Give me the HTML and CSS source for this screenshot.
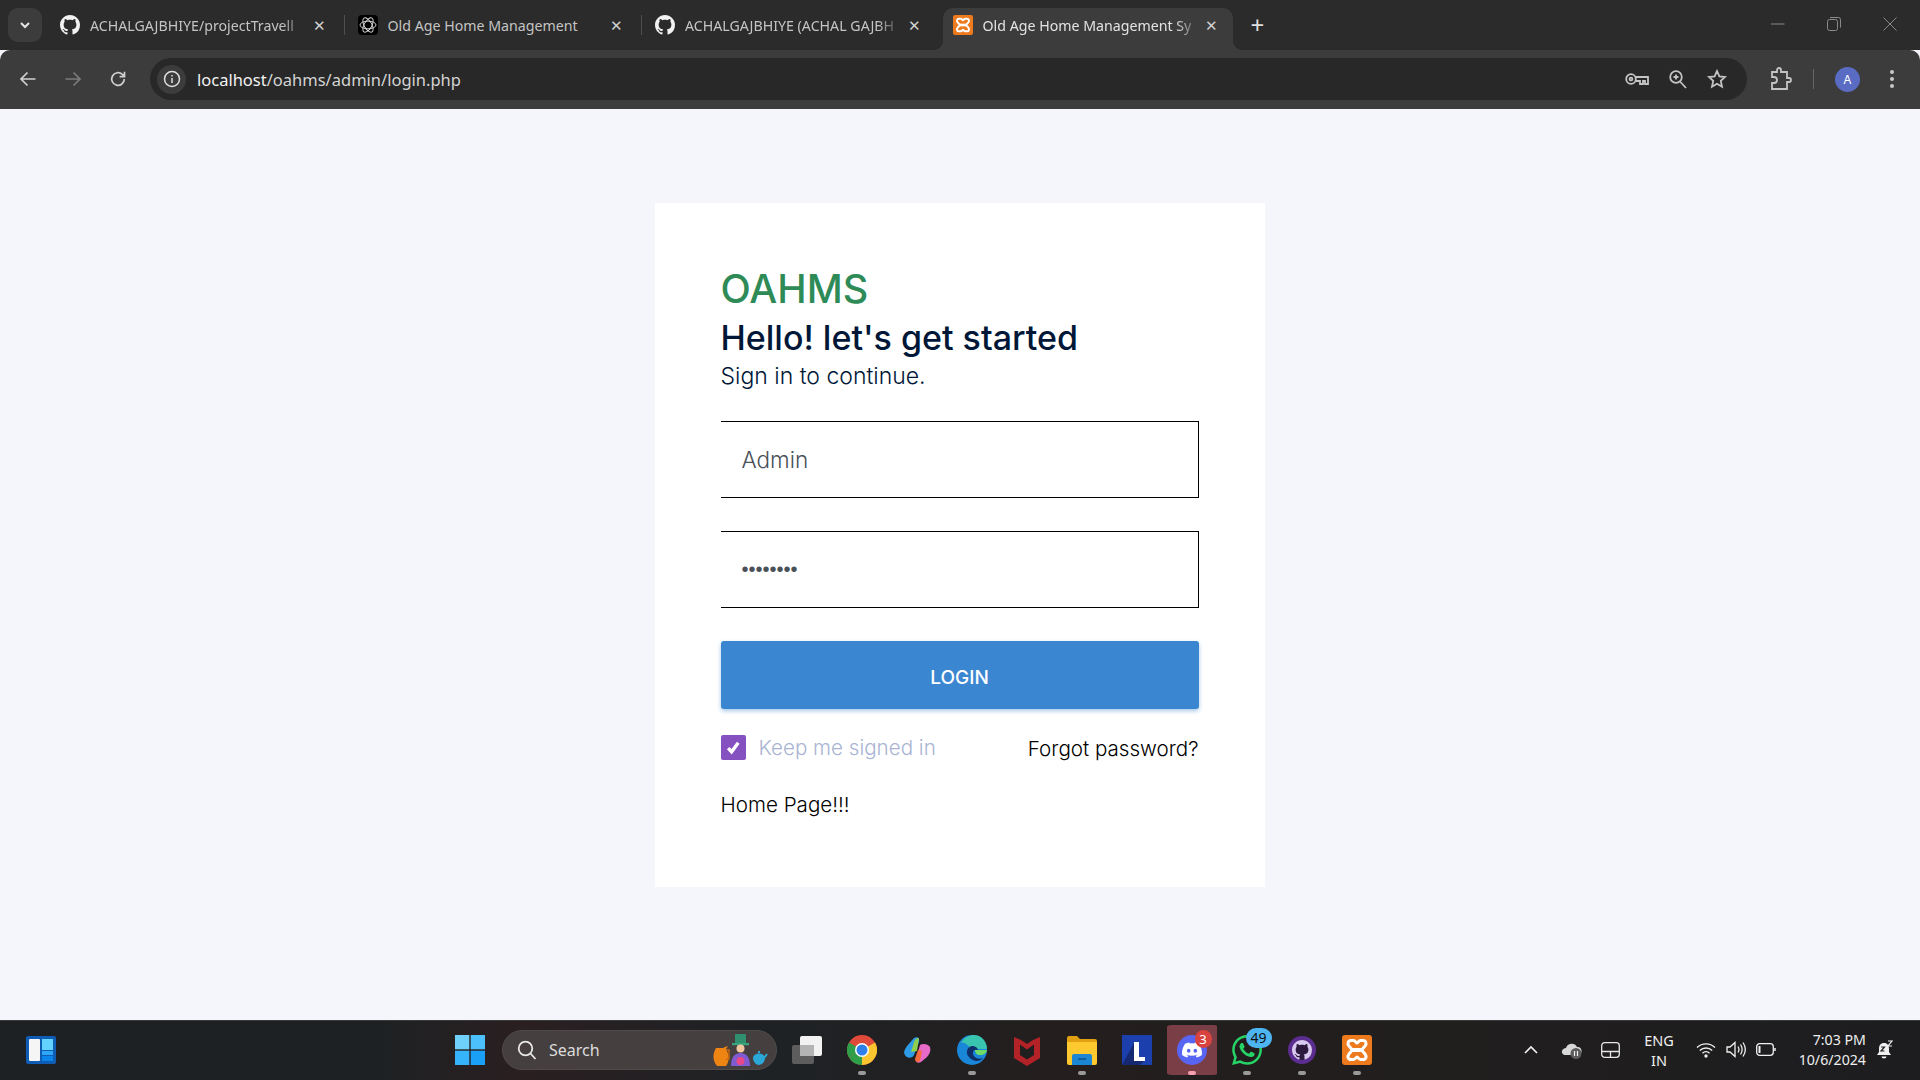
FILE: index.html

```html
<!DOCTYPE html>
<html lang="en">
<head>
  <meta charset="UTF-8">
  <meta name="viewport" content="width=device-width, initial-scale=1.0">
  <title>OAHMS Login</title>
  <link rel="stylesheet" href="styles.css">
</head>
<body>
  <svg class="sprite" aria-hidden="true">
    <symbol id="gh" viewBox="0 0 16 16"><path d="M8 0C3.58 0 0 3.58 0 8c0 3.54 2.29 6.53 5.47 7.59.4.07.55-.17.55-.38 0-.19-.01-.82-.01-1.49-2.01.37-2.53-.49-2.69-.94-.09-.23-.48-.94-.82-1.13-.28-.15-.68-.52-.01-.53.63-.01 1.08.58 1.23.82.72 1.21 1.87.87 2.33.66.07-.52.28-.87.51-1.07-1.78-.2-3.64-.89-3.64-3.95 0-.87.31-1.59.82-2.15-.08-.2-.36-1.02.08-2.12 0 0 .67-.21 2.2.82.64-.18 1.32-.27 2-.27.68 0 1.36.09 2 .27 1.53-1.04 2.2-.82 2.2-.82.44 1.1.16 1.92.08 2.12.51.56.82 1.27.82 2.15 0 3.07-1.87 3.75-3.65 3.95.29.25.54.73.54 1.48 0 1.07-.01 1.93-.01 2.2 0 .21.15.46.55.38A8.013 8.013 0 0016 8c0-4.42-3.58-8-8-8z"/></symbol>
    <symbol id="xampp" viewBox="0 0 30 30">
      <rect width="30" height="30" rx="3" fill="#ee7a1e"/>
      <path d="M9 5.500h2.500c2 0 2.500 2.500 3.500 2.500s1.500-2.500 3.500-2.500H21c3 0 4 3.500 2 5.500l-3 3.500v1l3 3.500c2 2.500 1 5.500-2 5.500h-2.500c-2 0-2.500-2.500-3.500-2.500s-1.500 2.500-3.500 2.500H9c-3 0-4-3-2-5.500l3-3.500v-1L7 11C5 9 6 5.500 9 5.500z" fill="none" stroke="#fff" stroke-width="3"/>
      <path d="M10 13h10v4H10z" fill="#fff"/>
    </symbol>
  </svg>

  <div class="tabstrip">
    <button class="tab-menu">
      <svg width="14" height="14" viewBox="0 0 14 14"><path d="M3 5l4 4 4-4" fill="none" stroke="#e6e6e6" stroke-width="2"/></svg>
    </button>
    <div class="tab">
      <svg class="favicon white" viewBox="0 0 16 16"><use href="#gh"/></svg>
      <span class="tab-title">ACHALGAJBHIYE/projectTravell</span>
      <span class="tab-close">✕</span>
    </div>
    <div class="tab sep">
      <svg class="favicon" viewBox="0 0 20 20">
        <rect width="20" height="20" rx="4" fill="#000"/>
        <g fill="none" stroke="#e0e0e0" stroke-width=".9">
          <ellipse cx="10" cy="10" rx="8" ry="3.800"/>
          <ellipse cx="10" cy="10" rx="8" ry="3.800" transform="rotate(60 10 10)"/>
          <ellipse cx="10" cy="10" rx="8" ry="3.800" transform="rotate(120 10 10)"/>
        </g>
      </svg>
      <span class="tab-title full">Old Age Home Management</span>
      <span class="tab-close">✕</span>
    </div>
    <div class="tab sep">
      <svg class="favicon white" viewBox="0 0 16 16"><use href="#gh"/></svg>
      <span class="tab-title">ACHALGAJBHIYE (ACHAL GAJBH</span>
      <span class="tab-close">✕</span>
    </div>
    <div class="tab active">
      <svg class="favicon" viewBox="0 0 30 30"><use href="#xampp"/></svg>
      <span class="tab-title">Old Age Home Management Sy</span>
      <span class="tab-close">✕</span>
    </div>
    <span class="new-tab">+</span>
    <div class="win-controls">
      <svg width="14" height="14" viewBox="0 0 14 14"><path d="M0 7h13.500" stroke="#8a8a8a"/></svg>
      <svg width="14" height="14" viewBox="0 0 14 14" fill="none" stroke="#8a8a8a"><rect x=".5" y="2.500" width="10" height="11" rx="2"/><path d="M3 .5h8.500a2 2 0 012 2v8"/></svg>
      <svg width="14" height="14" viewBox="0 0 14 14"><path d="M.5.5l13 13M13.500.5l-13 13" stroke="#8a8a8a"/></svg>
    </div>
  </div>

  <div class="toolbar">
    <div class="nav-btns">
      <svg width="18" height="18" viewBox="0 0 18 18" fill="none" stroke="#d0d0d0" stroke-width="1.700"><path d="M16.500 9H2M8.500 2.500L2 9l6.500 6.500"/></svg>
      <svg width="18" height="18" viewBox="0 0 18 18" fill="none" stroke="#7b7b7b" stroke-width="1.700"><path d="M1.500 9H16M9.500 2.500L16 9l-6.500 6.500"/></svg>
      <svg width="18" height="18" viewBox="0 0 18 18" fill="none" stroke="#d0d0d0" stroke-width="1.700"><path d="M15.300 9a6.300 6.300 0 11-2-4.600L15.500 6.500M15.500 1.800v4.900h-4.900"/></svg>
    </div>
    <div class="omnibox">
      <span class="site-info">
        <svg width="18" height="18" viewBox="0 0 18 18" fill="none" stroke="#e0e0e0" stroke-width="1.500"><circle cx="9" cy="9" r="7.500"/><path d="M9 8v5M9 5v1.500"/></svg>
      </span>
      <span class="url">localhost<span class="url-path">/oahms/admin/login.php</span></span>
      <div class="omni-icons">
        <svg width="24" height="14" viewBox="0 0 24 14" fill="none" stroke="#c4c4c4" stroke-width="1.800"><circle cx="6" cy="7" r="4.800"/><circle cx="6" cy="7" r="1.400"/><path d="M11 5h12v7h-3V9h-2v3h-3V9h-4"/></svg>
        <svg width="18" height="19" viewBox="0 0 18 19" fill="none" stroke="#c4c4c4" stroke-width="1.800"><circle cx="7" cy="7" r="5.800"/><path d="M11 11.500l6 6.500M4.500 7h5M7 4.500v5"/></svg>
        <svg width="20" height="20" viewBox="0 0 20 20" fill="none" stroke="#c4c4c4" stroke-width="1.800"><path d="M10 2l2.400 5.400 5.600.6-4.200 3.900 1.200 5.800-5-3-5 3 1.200-5.800L2 8l5.600-.6z"/></svg>
      </div>
    </div>
    <div class="tool-right">
      <svg class="ext" width="22" height="24" viewBox="0 0 22 24" fill="none" stroke="#c4c4c4" stroke-width="1.800"><path d="M2 5h5V3a2 2 0 014 0v2h6v6h2a2 2 0 010 4h-2v7H2v-6h2a3 3 0 000-6H2z"/></svg>
      <span class="tool-sep"></span>
      <span class="avatar">A</span>
      <svg class="dots" width="6" height="20" viewBox="0 0 6 20" fill="#c8c8c8"><circle cx="3" cy="3" r="2"/><circle cx="3" cy="10" r="2"/><circle cx="3" cy="17" r="2"/></svg>
    </div>
  </div>

  <main class="page">
    <div class="card">
      <h3 class="brand">OAHMS</h3>
      <h4 class="hello">Hello! let's get started</h4>
      <h6 class="sub">Sign in to continue.</h6>
      <form class="login-form" onsubmit="return false">
        <input class="field" type="text" value="Admin">
        <input class="field field-pass" type="password" value="password">
        <button class="login-btn">LOGIN</button>
        <div class="form-row">
          <label class="keep">
            <span class="check">
              <svg width="17" height="17" viewBox="0 0 16 16"><path d="M3 8.500l3.200 3.500 6.300-8.500" fill="none" stroke="#fff" stroke-width="3.200"/></svg>
            </span>
            Keep me signed in
          </label>
          <a class="link forgot" href="#">Forgot password?</a>
        </div>
        <div class="home-row"><a class="link" href="#">Home Page!!!</a></div>
      </form>
    </div>
  </main>

  <footer class="taskbar">
    <div class="task-left">
      <svg width="30" height="28" viewBox="0 0 30 28">
        <rect width="30" height="28" rx="2" fill="#0f5cb5"/>
        <rect x="3" y="3" width="11" height="22" rx="1" fill="#f5f5f5"/>
        <rect x="16" y="3" width="11" height="11" fill="#64d2ff"/>
        <rect x="16" y="15" width="11" height="4" fill="#2ea6f5"/>
        <rect x="16" y="20" width="11" height="5" fill="#0a84e8"/>
      </svg>
    </div>
    <div class="task-start">
      <svg width="30" height="30" viewBox="0 0 30 30">
        <rect width="14.300" height="14.300" fill="#6fd0fb"/><rect x="15.700" width="14.300" height="14.300" fill="#4cc0fb"/>
        <rect y="15.700" width="14.300" height="14.300" fill="#36b4fb"/><rect x="15.700" y="15.700" width="14.300" height="14.300" fill="#1ba0f8"/>
      </svg>
    </div>
    <div class="task-search">
      <svg width="20" height="20" viewBox="0 0 20 20" fill="none" stroke="#e8e8e8" stroke-width="1.800"><circle cx="8.500" cy="8.500" r="6.800"/><path d="M13.500 13.500l5 5.500"/></svg>
      <span class="search-text">Search</span>
      <svg class="search-art" width="56" height="32" viewBox="0 0 56 32">
        <path d="M4 14c-3 5-4 12 1 18h9c4-5 3-12 0-17l2-3-3 1-2 1H6z" fill="#ee8412"/>
        <path d="M14 16h3v9h-3" fill="none" stroke="#c96a10" stroke-width="1.500"/>
        <rect x="23" y="0" width="11" height="10" rx="1" fill="#2f8f6f"/><rect x="20" y="9" width="17" height="2.200" fill="#3aa37f"/>
        <circle cx="28.500" cy="14.500" r="4" fill="#f2c7a0"/>
        <path d="M19 32c0-8 3-13 9.500-13S38 24 38 32z" fill="#7e5bd0"/>
        <circle cx="28.500" cy="27" r="4" fill="#e8488a"/>
        <path d="M41 24c0-2.500 3-4.500 6-4.500s6 2 6 4.500-2 7-6 7-6-4.500-6-7z" fill="#2ba7d8"/><path d="M52 24l3-4M47 19v-2" stroke="#2ba7d8" stroke-width="2"/>
      </svg>
    </div>
    <div class="task-apps">
      <span class="app">
        <svg width="30" height="28" viewBox="0 0 30 28"><rect y="9" width="22" height="19" rx="2" fill="#5d5d5d"/><rect x="8" width="22" height="20" rx="2" fill="#f2f2f2"/><rect x="8" y="9" width="14" height="11" fill="#b4b4b4"/></svg>
      </span>
      <span class="app on">
        <svg width="30" height="30" viewBox="0 0 30 30">
          <circle cx="15" cy="15" r="15" fill="#e04a3b"/>
          <path d="M15 15L2 22.500A15 15 0 0015 30z" fill="#2f9e49"/>
          <path d="M15 15L2 22.500A15 15 0 012 7.500z" fill="#2f9e49"/>
          <path d="M15 15L28 7.500A15 15 0 0115 30z" fill="#fbc52f"/>
          <circle cx="15" cy="15" r="7" fill="#fff"/><circle cx="15" cy="15" r="5.500" fill="#2f7fea"/>
        </svg>
      </span>
      <span class="app">
        <svg width="28" height="28" viewBox="0 0 28 28">
          <path d="M11 2c3-2 6 0 5 4l-5 13c-1 3-7 4-9 0-2-3 0-6 2-9z" fill="#2d9be8"/>
          <path d="M11 6c1-3 3-4 5-4l-2 13-6 1z" fill="#8fd14f"/>
          <path d="M17 9c3-2 8-1 10 2 1 3 0 7-3 10l-6 5c-3 2-6 0-5-3z" fill="#e86ac8"/>
          <path d="M12 23l3-9 4 1-2 10c-2 2-5 1-5-2z" fill="#f56b3d"/>
        </svg>
      </span>
      <span class="app on">
        <svg width="30" height="30" viewBox="0 0 30 30">
          <circle cx="15" cy="15" r="15" fill="#1a86d8"/>
          <path d="M4 8c3-6 9-8 13-8 7 0 13 6 13 14H14C10 8 6 7 4 8z" fill="#39c4b0"/>
          <path d="M30 14c0 4-3 6-7 6-3 0-5-2-5-5h12z" fill="#6fdc6a"/>
          <path d="M12 22c-4-4-2-10 3-11 3 0 6 2 6 4-3-1-5 0-5 3 0 4 5 7 10 5-3 4-10 4-14-1z" fill="#0d2e68"/>
        </svg>
      </span>
      <span class="app">
        <svg width="28" height="32" viewBox="0 0 28 32"><path d="M1 3l7 3 6 4 6-4 7-3v21l-13 8-13-8z" fill="#b32227"/><path d="M7 10.500l7 5 7-5V21l-7 4.500L7 21z" fill="#1f1f1f"/></svg>
      </span>
      <span class="app on">
        <svg width="30" height="30" viewBox="0 0 30 30"><path d="M0 3a2 2 0 012-2h8l3 3h15a2 2 0 012 2v4H0z" fill="#e0a012"/><path d="M0 7h30v21a2 2 0 01-2 2H2a2 2 0 01-2-2z" fill="#fdc92f"/><path d="M5 21a2 2 0 012-2h16a2 2 0 012 2v9H5z" fill="#1b86d4"/><path d="M11 24h8" stroke="#0c4f8e" stroke-width="1.500"/></svg>
      </span>
      <span class="app">
        <svg width="30" height="30" viewBox="0 0 30 30"><rect width="30" height="30" fill="#1c3fae"/><path d="M0 30L12 8v18h10l-4 4z" fill="#14296f"/><path d="M12 7h5v15h6v4H12z" fill="#fff"/></svg>
      </span>
      <span class="app tile">
        <svg width="30" height="30" viewBox="0 0 30 30">
          <circle cx="15" cy="15" r="15" fill="#5865f2"/>
          <svg x="5" y="5" width="20" height="20" viewBox="0 0 24 24" fill="#fff"><path d="M20.317 4.37a19.791 19.791 0 0 0-4.885-1.515.074.074 0 0 0-.079.037c-.21.375-.444.864-.608 1.25a18.27 18.27 0 0 0-5.487 0 12.64 12.64 0 0 0-.617-1.25.077.077 0 0 0-.079-.037A19.736 19.736 0 0 0 3.677 4.37a.07.07 0 0 0-.032.027C.533 9.046-.32 13.58.099 18.057a.082.082 0 0 0 .031.057 19.9 19.9 0 0 0 5.993 3.03.078.078 0 0 0 .084-.028 14.09 14.09 0 0 0 1.226-1.994.076.076 0 0 0-.041-.106 13.107 13.107 0 0 1-1.872-.892.077.077 0 0 1-.008-.128 10.2 10.2 0 0 0 .372-.292.074.074 0 0 1 .077-.01c3.928 1.793 8.18 1.793 12.062 0a.074.074 0 0 1 .078.01c.12.098.246.198.373.292a.077.077 0 0 1-.006.127 12.299 12.299 0 0 1-1.873.892.077.077 0 0 0-.041.107c.36.698.772 1.362 1.225 1.993a.076.076 0 0 0 .084.028 19.839 19.839 0 0 0 6.002-3.03.077.077 0 0 0 .032-.054c.5-5.177-.838-9.674-3.549-13.66a.061.061 0 0 0-.031-.03zM8.020 15.330c-1.183 0-2.157-1.085-2.157-2.419 0-1.333.956-2.419 2.157-2.419 1.210 0 2.176 1.096 2.157 2.420 0 1.333-.956 2.418-2.157 2.418zm7.975 0c-1.183 0-2.157-1.085-2.157-2.419 0-1.333.955-2.419 2.157-2.419 1.210 0 2.176 1.096 2.157 2.420 0 1.333-.946 2.418-2.157 2.418z"/></svg>
        </svg>
        <span class="badge red">3</span>
      </span>
      <span class="app on">
        <svg width="30" height="30" viewBox="0 0 24 24" fill="#25d366"><path d="M17.472 14.382c-.297-.149-1.758-.867-2.030-.967-.273-.099-.471-.148-.67.150-.197.297-.767.966-.94 1.164-.173.199-.347.223-.644.075-.297-.150-1.255-.463-2.390-1.475-.883-.788-1.480-1.761-1.653-2.059-.173-.297-.018-.458.130-.606.134-.133.298-.347.446-.520.149-.174.198-.298.298-.497.099-.198.050-.371-.025-.520-.075-.149-.669-1.612-.916-2.207-.242-.579-.487-.500-.669-.510-.173-.008-.371-.010-.570-.010-.198 0-.520.074-.792.372-.272.297-1.040 1.016-1.040 2.479 0 1.462 1.065 2.875 1.213 3.074.149.198 2.096 3.200 5.077 4.487.709.306 1.262.489 1.694.625.712.227 1.360.195 1.871.118.571-.085 1.758-.719 2.006-1.413.248-.694.248-1.289.173-1.413-.074-.124-.272-.198-.570-.347m-5.421 7.403h-.004a9.870 9.870 0 01-5.031-1.378l-.361-.214-3.741.982.998-3.648-.235-.374a9.860 9.860 0 01-1.510-5.260c.001-5.450 4.436-9.884 9.888-9.884 2.640 0 5.122 1.030 6.988 2.898a9.825 9.825 0 012.893 6.994c-.003 5.450-4.437 9.884-9.885 9.884m8.413-18.297A11.815 11.815 0 0012.050 0C5.495 0 .160 5.335.157 11.892c0 2.096.547 4.142 1.588 5.945L.057 24l6.305-1.654a11.882 11.882 0 005.683 1.448h.005c6.554 0 11.890-5.335 11.893-11.893a11.821 11.821 0 00-3.480-8.413z"/></svg>
        <span class="badge blue">49</span>
      </span>
      <span class="app on">
        <svg width="28" height="28" viewBox="0 0 28 28"><circle cx="14" cy="14" r="14" fill="#5c2d91"/><circle cx="14" cy="14" r="10" fill="#2b1a3d"/><svg x="4" y="4" width="20" height="20" viewBox="0 0 16 16" fill="#d9c8ef"><use href="#gh"/></svg></svg>
      </span>
      <span class="app on">
        <svg width="30" height="30" viewBox="0 0 30 30"><use href="#xampp"/></svg>
      </span>
    </div>
    <div class="tray">
      <span class="tray-item w40"><svg width="14" height="9" viewBox="0 0 14 9" fill="none" stroke="#f0f0f0" stroke-width="1.700"><path d="M1 8l6-6 6 6"/></svg></span>
      <span class="tray-item w40">
        <svg width="21" height="18" viewBox="0 0 21 18"><path d="M1 12a4 4 0 014-5 6 6 0 0111-1 4 4 0 011 8H3z" fill="#d8d8d8"/><circle cx="15" cy="12.500" r="5.500" fill="#5d5d5d"/><path d="M13.500 10v5M16.500 10v5" stroke="#eee" stroke-width="1.200"/></svg>
      </span>
      <span class="tray-item w39"><svg width="19" height="16" viewBox="0 0 19 16" fill="none" stroke="#e6e6e6" stroke-width="1.300"><rect x=".7" y=".7" width="17.600" height="14.600" rx="3"/><path d="M1 9.500h17M9.500 9.500v6"/></svg></span>
      <span class="tray-lang">ENG<br>IN</span>
      <span class="tray-item w30"><svg width="20" height="16" viewBox="0 0 20 16" fill="none" stroke="#f0f0f0" stroke-width="1.400"><path d="M1 5.500a13 13 0 0118 0M3.800 8.500a9 9 0 0112.400 0M6.500 11.200a5 5 0 017 0"/><circle cx="10" cy="14" r="1" fill="#f0f0f0"/></svg></span>
      <span class="tray-item w30"><svg width="20" height="17" viewBox="0 0 20 17" fill="none" stroke="#f0f0f0" stroke-width="1.300"><path d="M1 6h3l5-4.500v14L4 11H1zM12 5.500c1.300 2 1.300 4 0 6M14.500 3.500c2.200 3.300 2.200 6.700 0 10M17 1.500c3 4.500 3 9.500 0 14"/></svg></span>
      <span class="tray-item w30"><svg width="20" height="13" viewBox="0 0 20 13" fill="none" stroke="#f0f0f0" stroke-width="1.300"><rect x=".7" y=".7" width="16.600" height="11.600" rx="3"/><path d="M3.500 3v7" stroke-width="2"/><path d="M19 5v3" stroke-width="1.500"/></svg></span>
      <span class="tray-clock">7:03 PM<br>10/6/2024</span>
      <span class="tray-item w28">
        <svg width="18" height="20" viewBox="0 0 18 20"><path d="M8 3c-3.500 0-5 2.500-5 6v3l-2 3h14l-2-3V9c0-3.500-1.500-6-5-6z" fill="#f0f0f0"/><path d="M5.500 16.500a2.500 2 0 005 0" fill="#f0f0f0"/><path d="M5 7h3.500L5 11h3.500" fill="none" stroke="#1f1f1f" stroke-width="1.200"/><path d="M12 1h4l-4 5h4" fill="none" stroke="#f0f0f0" stroke-width="1.200"/></svg>
      </span>
    </div>
  </footer>
</body>
</html>
```

FILE: styles.css

```css
* {
  box-sizing: border-box;
}
body {
  margin: 0;
  height: 100vh;
  overflow: hidden;
  display: flex;
  flex-direction: column;
  font-family: "Inter", "Liberation Sans", sans-serif;
  background-color: #f4f6fb;
}
.sprite {
  display: none;
}

/* browser tabs */
.tabstrip {
  height: 50px;
  flex: none;
  display: flex;
  align-items: flex-end;
  padding-left: 8px;
  background-color: #2b2b2b;
  font-family: "Noto Sans", sans-serif;
}
.tab-menu {
  width: 34px;
  height: 34px;
  margin-bottom: 8px;
  margin-right: 8px;
  border: none;
  border-radius: 10px;
  background-color: #3c3c3c;
  display: flex;
  align-items: center;
  justify-content: center;
  padding: 0;
}
.tab {
  position: relative;
  width: 290px;
  height: 42px;
  margin-right: 7.5px;
  padding: 0 10px 8px;
  display: flex;
  align-items: center;
  color: #c4c4c4;
  font-size: 14.2px;
}
.tab.sep::before {
  content: "";
  position: absolute;
  left: -4px;
  top: 7px;
  width: 1px;
  height: 20px;
  background-color: #4f4f4f;
}
.tab.active {
  background-color: #3c3c3c;
  border-radius: 10px 10px 0 0;
  color: #e3e3e3;
  margin-right: 0;
}
.tab.active::before,
.tab.active::after {
  content: "";
  position: absolute;
  bottom: 0;
  width: 10px;
  height: 10px;
}
.tab.active::before {
  left: -10px;
  background: radial-gradient(circle at 0 0, #2b2b2b 10px, #3c3c3c 10.5px);
}
.tab.active::after {
  right: -10px;
  background: radial-gradient(circle at 100% 0, #2b2b2b 10px, #3c3c3c 10.5px);
}
.favicon {
  width: 20px;
  height: 20px;
  flex: none;
  margin-right: 10px;
}
.favicon.white {
  fill: #f2f2f2;
}
.tab-title {
  flex: 1;
  white-space: nowrap;
  -webkit-mask-image: linear-gradient(90deg, #000 88%, transparent);
  mask-image: linear-gradient(90deg, #000 88%, transparent);
}
.tab-title.full {
  -webkit-mask-image: none;
  mask-image: none;
}
.tab-close {
  width: 22px;
  flex: none;
  text-align: center;
  font-size: 15px;
  color: #d0d0d0;
}
.new-tab {
  margin: 0 0 10px 18px;
  color: #e0e0e0;
  font-size: 24px;
  line-height: 30px;
}
.win-controls {
  margin-left: auto;
  align-self: flex-start;
  display: flex;
  gap: 42px;
  padding: 17px 23px 0 0;
}

/* address bar */
.toolbar {
  height: 59px;
  flex: none;
  display: flex;
  align-items: center;
  padding-bottom: 1px;
  background-color: #3c3c3c;
  border-radius: 10px 10px 0 0;
}
.nav-btns {
  width: 150px;
  flex: none;
  display: flex;
  gap: 27px;
  padding-left: 19px;
}
.omnibox {
  width: 1597px;
  height: 42px;
  flex: none;
  display: flex;
  align-items: center;
  padding-left: 7px;
  background-color: #282828;
  border-radius: 21px;
}
.site-info {
  width: 29px;
  height: 29px;
  margin-right: 11px;
  border-radius: 50%;
  background-color: #3c3c3c;
  display: flex;
  align-items: center;
  justify-content: center;
}
.url {
  font-family: "Noto Sans", sans-serif;
  font-size: 16.5px;
  color: #f2f2f2;
}
.url-path {
  color: #d4d4d4;
}
.omni-icons {
  margin-left: auto;
  display: flex;
  align-items: center;
  gap: 20px;
  padding-right: 20px;
}
.tool-right {
  flex: 1;
  display: flex;
  align-items: center;
  padding-left: 23px;
}
.tool-sep {
  width: 1px;
  height: 20px;
  margin: 0 21px 0 21px;
  background-color: #666;
}
.avatar {
  width: 25px;
  height: 25px;
  border-radius: 50%;
  background-color: #5a6bc4;
  color: #fff;
  font-size: 12px;
  display: flex;
  align-items: center;
  justify-content: center;
}
.dots {
  margin-left: 29px;
}

/* login card */
.page {
  flex: 1;
  display: flex;
  justify-content: center;
  padding-top: 94px;
}
.card {
  width: 610px;
  height: 684px;
  margin-left: -1px;
  padding: 62px 66px 0;
  background-color: #fff;
}
.brand {
  margin: 0;
  font-size: 39.5px;
  line-height: 48px;
  font-weight: 500;
  color: #2e8b57;
}
.hello {
  margin: 3px 0 0;
  font-size: 34px;
  line-height: 44px;
  font-weight: 500;
  color: #001737;
}
.sub {
  margin: 1px 0 0;
  font-size: 23px;
  line-height: 30px;
  font-weight: 300;
  color: #001737;
}
.login-form {
  margin-top: 30px;
}
.field {
  display: block;
  width: 100%;
  height: 77px;
  margin-bottom: 33px;
  padding: 0 21px;
  border: 1.5px solid #000;
  border-left: none;
  border-radius: 0;
  font-family: inherit;
  font-size: 22.5px;
  font-weight: 300;
  color: #495057;
  background: #fff;
}
.field-pass {
  font-family: "Liberation Sans", sans-serif;
  font-size: 20px;
}
.login-btn {
  display: block;
  width: 100%;
  height: 68px;
  padding-top: 5px;
  border: none;
  border-radius: 3px;
  background-color: #3b86d1;
  box-shadow: 0 2px 4px rgba(59, 134, 209, 0.45);
  color: #fff;
  font-family: inherit;
  font-size: 19px;
  font-weight: 500;
}
.form-row {
  margin-top: 25px;
  display: flex;
  align-items: center;
  justify-content: space-between;
}
.keep {
  display: flex;
  align-items: center;
  gap: 13px;
  color: #a9b3d3;
  font-size: 20.6px;
  font-weight: 300;
}
.check {
  width: 25px;
  height: 25px;
  border-radius: 2px;
  background-color: #8551c0;
  display: flex;
  align-items: center;
  justify-content: center;
}
.link {
  color: #000;
  font-size: 20.6px;
  font-weight: 300;
  text-decoration: none;
}
.forgot {
  margin-top: 2px;
}
.home-row {
  margin-top: 31px;
}

/* windows taskbar */
.taskbar {
  height: 60px;
  flex: none;
  display: flex;
  align-items: center;
  padding-bottom: 2px;
  border-top: 1px solid #3a3a3a;
  background: linear-gradient(90deg, #1d2124 0, #1e2123 20%, #2a1f21 27%, #1e2225 40%, #241e1e 55%, #201e1e 80%, #1d1d20 100%);
  font-family: "Noto Sans", sans-serif;
  color: #eee;
}
.task-left {
  width: 442px;
  flex: none;
  padding-left: 26px;
  display: flex;
}
.task-start {
  width: 56px;
  flex: none;
  display: flex;
  justify-content: center;
}
.task-search {
  width: 275px;
  height: 40px;
  flex: none;
  margin-left: 4px;
  padding-left: 14px;
  display: flex;
  align-items: center;
  border-radius: 20px;
  background-color: #45403f;
  border: 1px solid #4f4b4b;
}
.search-text {
  margin-left: 12px;
  font-size: 16px;
  color: #dcdcdc;
}
.search-art {
  margin-left: auto;
  margin-right: 8px;
}
.task-apps {
  margin-left: 2.5px;
  display: flex;
}
.app {
  position: relative;
  width: 55px;
  height: 50px;
  display: flex;
  align-items: center;
  justify-content: center;
}
.app.on::after,
.app.tile::after {
  content: "";
  position: absolute;
  left: 23.5px;
  bottom: 0;
  width: 8px;
  height: 4px;
  border-radius: 2px;
  background-color: #9a9a9a;
}
.app.tile {
  background: linear-gradient(#7a3f46, #7a3f46) center / 50px 50px no-repeat;
  border-radius: 6px;
}
.app.tile::after {
  background-color: #f5a0b0;
}
.badge {
  position: absolute;
  border-radius: 10px;
  font-size: 13px;
  text-align: center;
}
.badge.red {
  top: 5px;
  right: 8px;
  width: 17px;
  height: 18px;
  line-height: 18px;
  background-color: #d9433f;
  color: #fff;
}
.badge.blue {
  top: 3px;
  right: 3px;
  width: 26px;
  height: 20px;
  line-height: 20px;
  font-size: 14px;
  background-color: #4db5f0;
  color: #111;
}
.tray {
  margin-left: auto;
  display: flex;
  align-items: center;
  padding-right: 21px;
}
.tray-item {
  display: flex;
  justify-content: center;
  align-items: center;
}
.w40 { width: 40px; }
.w39 { width: 39px; }
.w30 { width: 30px; }
.w28 { width: 28px; margin-left: 5px; }
.tray-lang {
  width: 58px;
  margin-right: 3px;
  text-align: center;
  font-size: 14.5px;
  line-height: 20px;
}
.tray-clock {
  width: 80px;
  margin-left: 5px;
  text-align: right;
  font-size: 14.2px;
  line-height: 20px;
}
```
